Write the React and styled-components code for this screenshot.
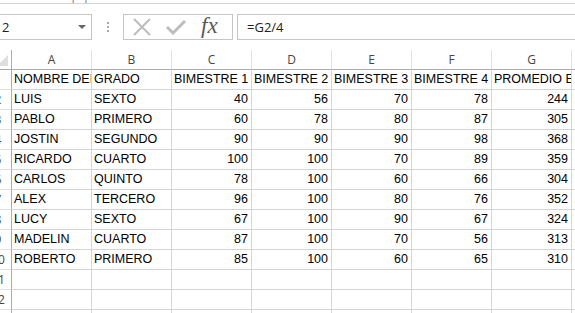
import React from "react";
import styled, { createGlobalStyle } from "styled-components";

const GlobalStyle = createGlobalStyle`
  html, body {
    margin: 0;
    padding: 0;
    background: #ffffff;
    overflow: hidden;
  }
`;

const Page = styled.div`
  width: 575px;
  height: 313px;
  overflow: hidden;
  background: #ffffff;
  display: flex;
  flex-direction: column;

  & > * {
    flex-shrink: 0;
  }
`;

const Ribbon = styled.div`
  height: 3px;
  border-bottom: 1px solid #d5d5d5;
  overflow: hidden;
`;

const RibbonLabel = styled.div`
  margin-top: -11px;
  padding-left: 44px;
  font-family: "Open Sans", sans-serif;
  font-size: 11px;
  line-height: 13px;
  color: #777;
`;

const FormulaBar = styled.div`
  margin-top: 10px;
  height: 26px;
  display: flex;
  align-items: stretch;
`;

const NameBox = styled.div`
  width: 93px;
  margin-left: -1px;
  box-sizing: border-box;
  border: 1px solid #c6c6c6;
  display: flex;
  align-items: center;
  justify-content: space-between;
  padding: 0 5px 0 2px;
  font-family: "Open Sans", sans-serif;
  font-size: 13px;
  color: #222;
`;

const Caret = styled.span`
  width: 0;
  height: 0;
  border-left: 4px solid transparent;
  border-right: 4px solid transparent;
  border-top: 4px solid #666;
`;

const Grip = styled.div`
  width: 31px;
  display: flex;
  flex-direction: column;
  align-items: center;
  justify-content: center;
  gap: 2px;
`;

const GripDot = styled.span`
  width: 2px;
  height: 2px;
  background: #a8a8a8;
`;

const ActionBox = styled.div`
  width: 110px;
  box-sizing: border-box;
  border: 1px solid #c6c6c6;
  display: flex;
  align-items: center;
  padding: 0 0 0 9px;
  gap: 15px;
`;

const FxLabel = styled.span`
  font-family: "Liberation Serif", serif;
  font-style: italic;
  font-size: 23px;
  color: #585858;
  margin-left: 0px;
  margin-top: -3px;
`;

const FormulaInput = styled.div`
  flex: 1;
  margin-left: 4px;
  box-sizing: border-box;
  border: 1px solid #c6c6c6;
  border-right: none;
  display: flex;
  align-items: center;
  padding-left: 9px;
  font-family: "Open Sans", sans-serif;
  font-size: 13px;
  color: #222;
`;

const Sheet = styled.div`
  margin-top: 10px;
  margin-left: -15px;
  display: grid;
  grid-template-columns: 27px repeat(7, 80px) 40px;
  grid-auto-rows: 20px;
`;

const Cell = styled.div`
  box-sizing: border-box;
  border-right: 1px solid #d4d4d4;
  border-bottom: 1px solid #d4d4d4;
  overflow: hidden;
  white-space: nowrap;
  font-family: "Liberation Sans", Arial, sans-serif;
  font-size: 12.5px;
  line-height: 19px;
  color: #000;
  padding: 0 3px 0 2px;
  text-align: ${(p) => (p.$num ? "right" : "left")};
`;

const ColHead = styled.div`
  box-sizing: border-box;
  border-right: 1px solid #e1e1e1;
  border-bottom: 1px solid #ababab;
  font-family: "Open Sans", sans-serif;
  font-size: 12px;
  line-height: 19px;
  color: #444;
  text-align: center;
`;

const Corner = styled.div`
  box-sizing: border-box;
  border-right: 1px solid #ababab;
  border-bottom: 1px solid #ababab;
  display: flex;
  justify-content: flex-end;
  align-items: flex-end;
  padding: 0 3px 3px 0;
`;

const CornerMark = styled.span`
  width: 0;
  height: 0;
  border-left: 11px solid transparent;
  border-bottom: 11px solid #dedede;
`;

const RowHead = styled.div`
  box-sizing: border-box;
  border-right: 1px solid #ababab;
  border-bottom: 1px solid #e1e1e1;
  font-family: "Open Sans", sans-serif;
  font-size: 12px;
  line-height: 19px;
  color: #444;
  text-align: center;
`;

const XIcon = () => (
  <svg width="18" height="18" viewBox="0 0 18 18">
    <path d="M1 1 L17 17 M17 1 L1 17" stroke="#bdbdbd" strokeWidth="2" fill="none" />
  </svg>
);

const CheckIcon = () => (
  <svg width="20" height="16" viewBox="0 0 20 16">
    <path d="M1 8 L7 14 L19 2" stroke="#bdbdbd" strokeWidth="3" fill="none" />
  </svg>
);

const columns = ["A", "B", "C", "D", "E", "F", "G", "H"];

const students = [
  ["LUIS", "SEXTO", 40, 56, 70, 78, 244, "."],
  ["PABLO", "PRIMERO", 60, 78, 80, 87, 305, ""],
  ["JOSTIN", "SEGUNDO", 90, 90, 90, 98, 368, ""],
  ["RICARDO", "CUARTO", 100, 100, 70, 89, 359, ""],
  ["CARLOS", "QUINTO", 78, 100, 60, 66, 304, ""],
  ["ALEX", "TERCERO", 96, 100, 80, 76, 352, "."],
  ["LUCY", "SEXTO", 67, 100, 90, 67, 324, ""],
  ["MADELIN", "CUARTO", 87, 100, 70, 56, 313, "."],
  ["ROBERTO", "PRIMERO", 85, 100, 60, 65, 310, ""],
];

const header = [
  "NOMBRE DEL ALUMNO",
  "GRADO",
  "BIMESTRE 1",
  "BIMESTRE 2",
  "BIMESTRE 3",
  "BIMESTRE 4",
  "PROMEDIO ESTUDIANTE",
  "",
];

const emptyRow = ["", "", "", "", "", "", "", ""];

const App = () => {
  const rows = [header, ...students, emptyRow, emptyRow, emptyRow];
  return (
    <Page>
      <GlobalStyle />
      <Ribbon>
        <RibbonLabel>Portapapeles</RibbonLabel>
      </Ribbon>
      <FormulaBar>
        <NameBox>
          <span>2</span>
          <Caret />
        </NameBox>
        <Grip>
          <GripDot />
          <GripDot />
          <GripDot />
        </Grip>
        <ActionBox>
          <XIcon />
          <CheckIcon />
          <FxLabel>fx</FxLabel>
        </ActionBox>
        <FormulaInput>=G2/4</FormulaInput>
      </FormulaBar>
      <Sheet>
        <Corner>
          <CornerMark />
        </Corner>
        {columns.map((c) => (
          <ColHead key={c}>{c}</ColHead>
        ))}
        {rows.map((row, i) => (
          <React.Fragment key={i}>
            <RowHead>{i + 1}</RowHead>
            {row.map((v, j) => (
              <Cell key={j} $num={typeof v === "number"}>
                {v}
              </Cell>
            ))}
          </React.Fragment>
        ))}
      </Sheet>
    </Page>
  );
};

export default App;
